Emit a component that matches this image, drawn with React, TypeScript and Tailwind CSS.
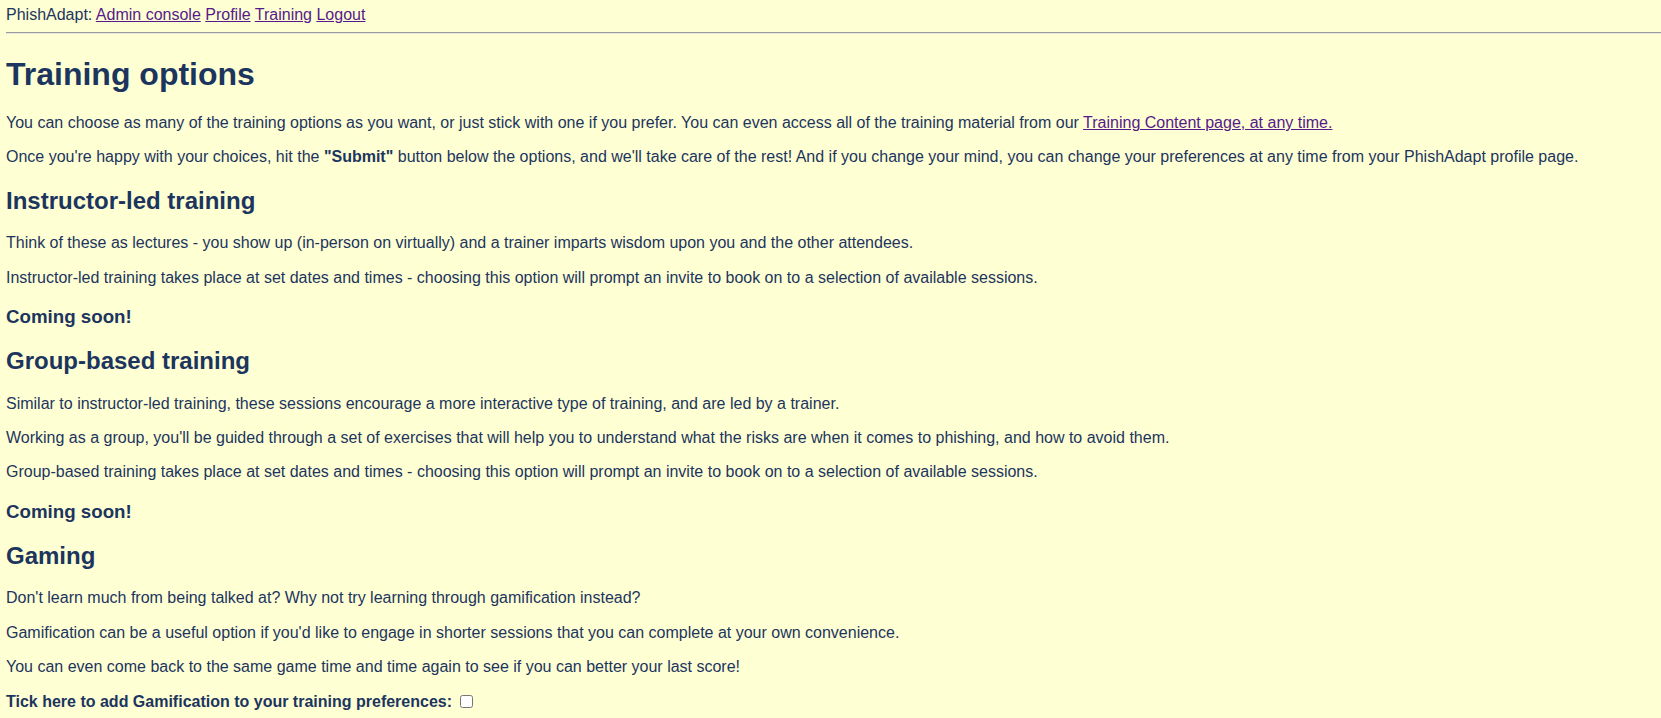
const sections = [
    {
        title: 'Instructor-led training',
        paragraphs: [
            'Think of these as lectures - you show up (in-person on virtually) and a trainer imparts wisdom upon you and the other attendees.',
            'Instructor-led training takes place at set dates and times - choosing this option will prompt an invite to book on to a selection of available sessions.',
        ],
    },
    {
        title: 'Group-based training',
        paragraphs: [
            'Similar to instructor-led training, these sessions encourage a more interactive type of training, and are led by a trainer.',
            "Working as a group, you'll be guided through a set of exercises that will help you to understand what the risks are when it comes to phishing, and how to avoid them.",
            'Group-based training takes place at set dates and times - choosing this option will prompt an invite to book on to a selection of available sessions.',
        ],
    },
]

const gaming = [
    "Don't learn much from being talked at? Why not try learning through gamification instead?",
    "Gamification can be a useful option if you'd like to engage in shorter sessions that you can complete at your own convenience.",
    'You can even come back to the same game time and time again to see if you can better your last score!',
]

const navLinks = ['Admin console', 'Profile', 'Training', 'Logout']

export default function App() {
    return (
        <div className="min-h-screen bg-[#ffffd4] pl-[6px] pt-[6px] pb-8 text-[16px] leading-[1.15] text-[#1c355e] [font-family:'Liberation_Sans',Arial,sans-serif]">
            {/* Nav */}
            <div>
                PhishAdapt:{' '}
                {navLinks.map((label) => (
                    <span key={label}>
                        <a href="#" className="text-[#551a8b] underline">
                            {label}
                        </a>{' '}
                    </span>
                ))}
            </div>
            <hr className="my-2 border-t border-b border-t-[#9a9a9a] border-b-[#e8e8e0]" />

            <div className="pr-2">
                <h1 className="my-[21.44px] text-[32px] font-bold">Training options</h1>
                <p className="my-4">
                    You can choose as many of the training options as you want, or just stick with one if you prefer. You can even
                    access all of the training material from our{' '}
                    <a href="#" className="text-[#551a8b] underline">
                        Training Content page, at any time.
                    </a>
                </p>
                <p className="my-4">
                    Once you're happy with your choices, hit the <b>"Submit"</b> button below the options, and we'll take care of the
                    rest! And if you change your mind, you can change your preferences at any time from your PhishAdapt profile page.
                </p>

                {sections.map((s) => (
                    <div key={s.title}>
                        <h2 className="my-[19.92px] text-[24px] font-bold">{s.title}</h2>
                        {s.paragraphs.map((t) => (
                            <p key={t} className="my-4">
                                {t}
                            </p>
                        ))}
                        <h3 className="my-[18.72px] text-[18.72px] font-bold">Coming soon!</h3>
                    </div>
                ))}

                {/* Gaming */}
                <h2 className="my-[19.92px] text-[24px] font-bold">Gaming</h2>
                {gaming.map((t) => (
                    <p key={t} className="my-4">
                        {t}
                    </p>
                ))}
                <p className="my-4 flex items-center font-bold">
                    <label htmlFor="gamification">Tick here to add Gamification to your training preferences:</label>
                    <input id="gamification" type="checkbox" className="ml-[8px] h-[13px] w-[13px]" />
                </p>
            </div>
        </div>
    )
}
